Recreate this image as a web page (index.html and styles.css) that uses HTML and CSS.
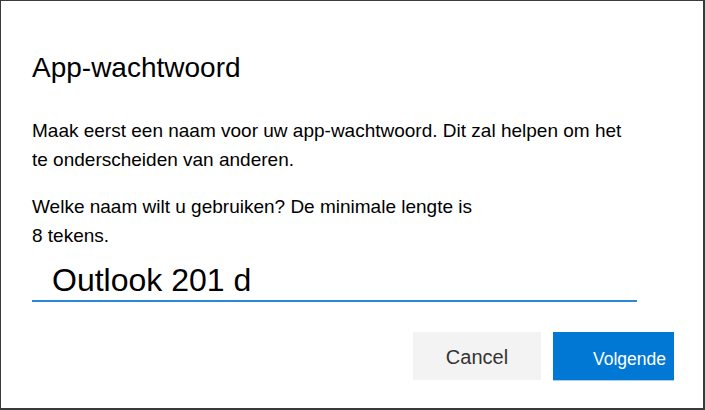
FILE: index.html
```html
<!DOCTYPE html>
<html lang="nl">
<head>
<meta charset="utf-8">
<title>App-wachtwoord</title>
<link rel="stylesheet" href="styles.css">
</head>
<body>
<div class="dialog">
  <h1 class="title">App-wachtwoord</h1>
  <p class="text text-first">Maak eerst een naam voor uw app-wachtwoord. Dit zal helpen om het<br>te onderscheiden van anderen.</p>
  <p class="text text-second">Welke naam wilt u gebruiken? De minimale lengte is<br>8 tekens.</p>
  <div class="field">Outlook 201 d</div>
  <div class="actions">
    <button class="btn btn-cancel" type="button">Cancel</button>
    <button class="btn btn-next" type="button">Volgende</button>
  </div>
</div>
</body>
</html>
```
FILE: styles.css
```css
html, body {
  margin: 0;
  padding: 0;
  background: #ffffff;
}

.dialog {
  box-sizing: border-box;
  width: 705px;
  height: 410px;
  border-style: solid;
  border-color: #3a3a3a;
  border-width: 1px 2px 2px 1px;
  padding: 51px 29px 0 31px;
  font-family: "Liberation Sans", Arial, sans-serif;
  color: #000000;
  background: #ffffff;
}

.title {
  margin: 0;
  font-size: 28px;
  font-weight: normal;
  line-height: 32px;
}

.text {
  margin: 0;
  font-size: 19px;
  line-height: 29px;
}

.text-first {
  margin-top: 32px;
}

.text-second {
  margin-top: 18px;
}

.field {
  box-sizing: border-box;
  width: 605px;
  margin-top: 12px;
  padding: 0 0 2px 20px;
  font-size: 32px;
  line-height: 36px;
  border-bottom: 2px solid #2b88d8;
}

.actions {
  display: flex;
  justify-content: flex-end;
  gap: 12px;
  margin-top: 30px;
}

.btn {
  box-sizing: border-box;
  height: 48px;
  border: none;
  margin: 0;
  font-family: "Liberation Sans", Arial, sans-serif;
  cursor: pointer;
}

.btn-cancel {
  width: 128px;
  padding: 2px 0 0 0;
  background: #f3f3f3;
  color: #333333;
  font-size: 20px;
  line-height: 46px;
  text-align: center;
}

.btn-next {
  width: 121px;
  padding: 7px 0 0 40px;
  background: #0078d4;
  color: #ffffff;
  font-size: 17.5px;
  line-height: 41px;
  text-align: left;
  box-shadow: 0 1px 0 #a9cff0;
}
```
